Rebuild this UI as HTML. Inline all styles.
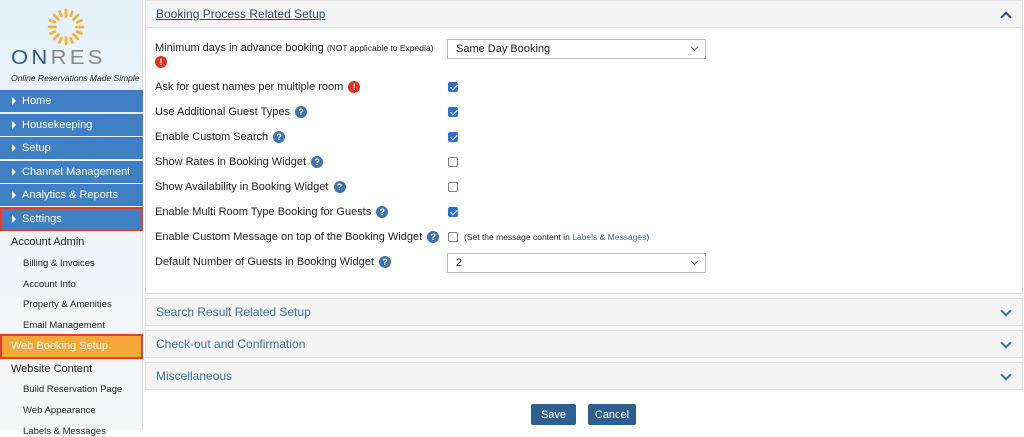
<!DOCTYPE html>
<html><head><meta charset="utf-8"><style>
*{margin:0;padding:0;box-sizing:border-box}
body{width:1024px;height:430px;overflow:hidden;font-family:"Liberation Sans",sans-serif;background:#fff;position:relative;font-size:11px;color:#222}
.sb{position:absolute;left:0;top:0;width:143px;height:430px;background:linear-gradient(#e4f2fa,#f3f6f8 60%,#f5f6f7);border-right:1px solid #ddd}
.a{position:absolute}
.mi{position:absolute;left:0;width:143px;height:22px;background:#3f7fc4;color:#fff;font-size:11px;line-height:22px;padding-left:12px}
.mi:before{content:"";display:inline-block;border-left:4px solid #fff;border-top:4px solid transparent;border-bottom:4px solid transparent;margin-right:6px;vertical-align:-1px}
.s1{position:absolute;left:11px;font-size:11px;color:#222}
.s2{position:absolute;left:23px;font-size:9.5px;color:#222}
.lb{position:absolute;left:155px;font-size:11px;color:#222;line-height:14px}
.q{display:inline-block;width:12px;height:12px;border-radius:50%;background:#3d72b3;color:#fff;font-size:9px;font-weight:bold;text-align:center;line-height:12px;vertical-align:top;margin-top:1px;margin-left:2px}
.x{background:#e03020}
.cb{position:absolute;left:448px;width:10px;height:10px;border:1px solid #888;border-radius:2px;background:#fff}
.cb.on{background:#2f6fd0;border-color:#2f6fd0}
.cb.on:after{content:"";position:absolute;left:2.5px;top:0px;width:3px;height:6px;border:solid #fff;border-width:0 1.5px 1.5px 0;transform:rotate(45deg)}
.sel{position:absolute;left:447px;width:259px;height:20px;border:1px solid #bbb;background:#fff;font-size:11px;line-height:18px;padding-left:8px}
.sel:after{content:"";position:absolute;right:8px;top:5px;width:4px;height:4px;border:solid #666;border-width:0 1px 1px 0;transform:rotate(45deg)}
.ph{position:absolute;left:145px;width:878px;height:28px;background:#f4f4f4;border:1px solid #e2e2e2;font-size:12px;color:#3a6ea8;line-height:26px;padding-left:10px}
.chev{position:absolute;right:12px;top:8px;width:8px;height:8px;border:solid #3a6ea8;border-width:0 2px 2px 0;transform:rotate(45deg)}
.btn{position:absolute;top:404px;height:21px;background:#2e5f8f;color:#fff;font-size:11px;line-height:21px;text-align:center;border-radius:2px}
</style></head><body>
<div class="sb">
<svg class="a" style="left:47px;top:8px" width="38" height="38" viewBox="0 0 36 36"><g stroke="#f3b03c" stroke-width="2.6" stroke-linecap="round">
<line x1="18" y1="2" x2="18" y2="8"/><line x1="18" y1="28" x2="18" y2="34"/><line x1="2" y1="18" x2="8" y2="18"/><line x1="28" y1="18" x2="34" y2="18"/>
<line x1="6.7" y1="6.7" x2="10.9" y2="10.9"/><line x1="25.1" y1="25.1" x2="29.3" y2="29.3"/><line x1="6.7" y1="29.3" x2="10.9" y2="25.1"/><line x1="25.1" y1="10.9" x2="29.3" y2="6.7"/>
<line x1="11.9" y1="3.3" x2="13.6" y2="7.5"/><line x1="24.1" y1="32.7" x2="22.4" y2="28.5"/><line x1="3.3" y1="24.1" x2="7.5" y2="22.4"/><line x1="32.7" y1="11.9" x2="28.5" y2="13.6"/>
<line x1="24.1" y1="3.3" x2="22.4" y2="7.5"/><line x1="11.9" y1="32.7" x2="13.6" y2="28.5"/><line x1="3.3" y1="11.9" x2="7.5" y2="13.6"/><line x1="32.7" y1="24.1" x2="28.5" y2="22.4"/></g></svg>
<div class="a" style="left:11px;top:47px;font-size:20px;letter-spacing:3px;color:#2f5a8c;transform:scaleX(1.1);transform-origin:left">ON<span style="color:#888">RES</span></div>
<div class="a" style="left:11px;top:73px;font-size:8.5px;font-style:italic;color:#222">Online Reservations Made Simple</div>
<div class="mi" style="top:90px">Home</div>
<div class="mi" style="top:114px">Housekeeping</div>
<div class="mi" style="top:137px">Setup</div>
<div class="mi" style="top:161px">Channel Management</div>
<div class="mi" style="top:184px">Analytics &amp; Reports</div>
<div class="mi" style="top:207px;height:24px;border:2px solid #e0402a;padding-left:10px;line-height:20px">Settings</div>
<div class="s1" style="top:236px">Account Admin</div>
<div class="s2" style="top:258px">Billing &amp; Invoices</div>
<div class="s2" style="top:279px">Account Info</div>
<div class="s2" style="top:299px">Property &amp; Amenities</div>
<div class="s2" style="top:320px">Email Management</div>
<div class="a" style="left:0;top:334px;width:143px;height:25px;background:#f5a83a;border:2px solid #e0402a;color:#fff;font-size:11px;line-height:21px;padding-left:9px">Web Booking Setup</div>
<div class="s1" style="top:363px">Website Content</div>
<div class="s2" style="top:384px">Build Reservation Page</div>
<div class="s2" style="top:405px">Web Appearance</div>
<div class="s2" style="top:426px">Labels &amp; Messages</div>
</div>

<div class="a" style="left:145px;top:0;width:878px;height:294px;border:1px solid #e2e2e2"></div>
<div class="ph" style="top:0"><span style="text-decoration:underline;color:#2a4a7a">Booking Process Related Setup</span><div class="chev" style="transform:rotate(-135deg);top:12px;border-color:#2a4a7a"></div></div>

<div class="lb" style="top:41px">Minimum days in advance booking <span style="font-size:8.5px">(NOT applicable to Expedia)</span></div>
<div class="lb" style="top:55px"><span class="q x" style="margin-left:0">!</span></div>
<div class="sel" style="top:39px">Same Day Booking</div>
<div class="lb" style="top:80px">Ask for guest names per multiple room <span class="q x">!</span></div><div class="cb on" style="top:82px"></div>
<div class="lb" style="top:105px">Use Additional Guest Types <span class="q">?</span></div><div class="cb on" style="top:107px"></div>
<div class="lb" style="top:130px">Enable Custom Search <span class="q">?</span></div><div class="cb on" style="top:132px"></div>
<div class="lb" style="top:155px">Show Rates in Booking Widget <span class="q">?</span></div><div class="cb" style="top:157px"></div>
<div class="lb" style="top:180px">Show Availability in Booking Widget <span class="q">?</span></div><div class="cb" style="top:182px"></div>
<div class="lb" style="top:205px">Enable Multi Room Type Booking for Guests <span class="q">?</span></div><div class="cb on" style="top:207px"></div>
<div class="lb" style="top:230px">Enable Custom Message on top of the Booking Widget <span class="q">?</span></div><div class="cb" style="top:232px"></div>
<div class="a" style="left:464px;top:232px;font-size:8.5px">(Set the message content in <span style="color:#3a6ea8">Labels &amp; Messages</span>)</div>
<div class="lb" style="top:255px">Default Number of Guests in Booking Widget <span class="q">?</span></div>
<div class="sel" style="top:253px">2</div>

<div class="ph" style="top:298px">Search Result Related Setup<div class="chev"></div></div>
<div class="ph" style="top:330px">Check-out and Confirmation<div class="chev"></div></div>
<div class="ph" style="top:362px">Miscellaneous<div class="chev"></div></div>

<div class="btn" style="left:531px;width:45px;line-height:22px">Save</div>
<div class="btn" style="left:588px;width:48px;line-height:22px">Cancel</div>
</body></html>
